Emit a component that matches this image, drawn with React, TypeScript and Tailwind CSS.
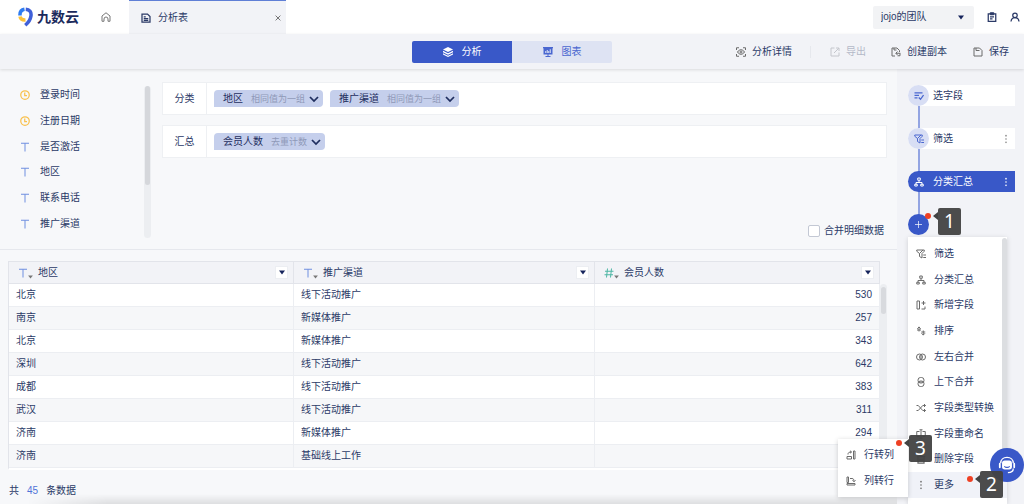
import { useState, type ReactNode } from "react";

type IconProps = { className?: string; children: ReactNode };

// All line icons share a 20x20 grid
function Icon({ className = "size-[10px]", children }: IconProps) {
  return (
    <svg
      viewBox="0 0 20 20"
      fill="none"
      stroke="currentColor"
      strokeWidth="2"
      className={`${className} shrink-0`}
      aria-hidden="true"
    >
      {children}
    </svg>
  );
}

const icons = {
  home: <path d="M6 18.500H2V8l8-6.500L18 8v10.500h-4M6 18.500V14a4 4 0 0 1 8 0v4.500" />,
  doc: <path strokeWidth="2.500" d="M2 2h11l5 5v11H2zM5.500 7.500h4M5.500 11h9M5.500 14.500h9" />,
  close: <path strokeWidth="3" d="M2 2l16 16M18 2L2 18" />,
  clipboard: (
    <>
      <path strokeWidth="2.500" d="M2.500 3.500h15v15h-15zM6 9.500h8M6 13.500h5" />
      <path fill="currentColor" d="M6.500 1.500h7v4h-7z" />
    </>
  ),
  user: (
    <>
      <circle cx="10" cy="6.500" r="4.500" strokeWidth="2.500" />
      <path strokeWidth="2.500" d="M2 19c.5-5 3-8 8-8s7.500 3 8 8" />
    </>
  ),
  detail: (
    <>
      <path d="M1 6V1.500h5M14 1.500h5V6M19 14v4.500h-5M6 18.500H1V14" />
      <path d="M3 10c3.500-6 10.500-6 14 0-3.500 6-10.500 6-14 0z" />
      <circle cx="10" cy="10" r="2" />
    </>
  ),
  exportOut: <path d="M9 2H2v16h16v-7M12 2h6v6M17.500 2.500L8 12" />,
  copy: <path d="M8 18H2V2h10l5 5v3M6 2v4h5M18.500 12.500H10m3-3.500l-3.500 3.500L13 16M18 12.500v5h-5" />,
  save: <path d="M2 2h11l5 5v11H2zM6 2v5h7" />,
  filter: <path d="M1.500 2h15v2.500L12 9v9l-5-3V9L1.500 4.500zM7 9l7-7M14.500 12H20M14.500 17H20" />,
  tree: (
    <>
      <path d="M10 7v4M4 15v-4h12v4" />
      <path d="M7.500 2h5v4.500h-5zM1.500 14.500h5v3.500h-5zM13.500 14.500h5v3.500h-5z" />
    </>
  ),
  pick: <path strokeWidth="2.500" d="M1 3.500h16M1 8.500h9M1 13.500h6M9.500 13l3.500 3.500 6-8.500" />,
  addCol: <path d="M2 2h5v16H2zM11 18h7v-5M15 2v8M11 6h8" />,
  sort: <path d="M6 11V1.500M2.500 5.500L6 2l3.500 3.500M2 8h8M14.500 9v9.500M11 14.500l3.500 3.500 3.500-3.500M10.500 12h8" />,
  joinH: (
    <>
      <rect x="1" y="4" width="12" height="12" rx="6" />
      <rect x="7" y="4" width="12" height="12" rx="6" />
      <path d="M10 6v8" />
    </>
  ),
  joinV: (
    <>
      <rect x="4" y="1" width="12" height="11" rx="5" />
      <rect x="4" y="8" width="12" height="11" rx="5" />
      <path d="M6 10h8" />
    </>
  ),
  shuffle: <path d="M1 5h3.500l9 10H19M1 15h3.500l9-10H19M16 2l3 3-3 3M16 12l3 3-3 3" />,
  rename: <path d="M7 5H1.500v10H7M13 5h5.500v10H13M10 2v16M7 1.500h6M7 18.500h6" />,
  trash: <path strokeWidth="2.500" d="M1.500 5h17M7 2h6M4 5v13h12V5M8 9v5M12 9v5" />,
  rowToCol: <path d="M15 2h3v16h-3zM2 13h9v5H2zM4 9c0-4 2-5 7-5M8 1.500L11 4 8 6.500" />,
  colToRow: <path d="M2 2h3v11H2zM2 15h16v3H2zM8 5h4c3 0 4 2 4 6M13 8.500l3 3 3-3" />,
};

function Dots({ className = "" }: { className?: string }) {
  return (
    <svg viewBox="0 0 4 12" fill="currentColor" className={`h-[10px] w-[4px] shrink-0 ${className}`} aria-hidden="true">
      <circle cx="2" cy="2" r="1" />
      <circle cx="2" cy="6" r="1" />
      <circle cx="2" cy="10" r="1" />
    </svg>
  );
}

function Caret({ className = "" }: { className?: string }) {
  return (
    <svg viewBox="0 0 6 5" fill="currentColor" className={className} aria-hidden="true">
      <path d="M0 0.500h6L3 4.500z" />
    </svg>
  );
}

function Logo() {
  return (
    <svg viewBox="0 0 30 40" fill="none" className="h-[20px] w-[15px]" aria-hidden="true">
      <path d="M4 17C3.500 10 7 5.500 13 4.500" stroke="#2f7cf0" strokeWidth="7" />
      <path d="M15.500 4.500C23 5 27 10 26 17.500 25 25 21 31 14.500 36.500" stroke="#4060d8" strokeWidth="7" />
      <path d="M4 19c1 5 4.500 7.500 11 7" stroke="#fbc13a" strokeWidth="7" />
    </svg>
  );
}

const fields = [
  { name: "登录时间", type: "date" },
  { name: "注册日期", type: "date" },
  { name: "是否激活", type: "text" },
  { name: "地区", type: "text" },
  { name: "联系电话", type: "text" },
  { name: "推广渠道", type: "text" },
];

const groups = [
  {
    label: "分类",
    tags: [
      { name: "地区", hint: "相同值为一组" },
      { name: "推广渠道", hint: "相同值为一组" },
    ],
  },
  { label: "汇总", tags: [{ name: "会员人数", hint: "去重计数" }] },
];

const rows = [
  { city: "北京", channel: "线下活动推广", count: 530 },
  { city: "南京", channel: "新媒体推广", count: 257 },
  { city: "北京", channel: "新媒体推广", count: 343 },
  { city: "深圳", channel: "线下活动推广", count: 642 },
  { city: "成都", channel: "线下活动推广", count: 383 },
  { city: "武汉", channel: "线下活动推广", count: 311 },
  { city: "济南", channel: "新媒体推广", count: 294 },
  { city: "济南", channel: "基础线上工作", count: "" },
];

const menu = [
  { label: "筛选", icon: icons.filter },
  { label: "分类汇总", icon: icons.tree },
  { label: "新增字段", icon: icons.addCol },
  { label: "排序", icon: icons.sort },
  { label: "左右合并", icon: icons.joinH },
  { label: "上下合并", icon: icons.joinV },
  { label: "字段类型转换", icon: icons.shuffle },
  { label: "字段重命名", icon: icons.rename },
  { label: "删除字段", icon: icons.trash },
];

function TypeIcon({ type }: { type: string }) {
  if (type === "date") {
    return (
      <Icon className="size-[10px] text-[#f9c14d]">
        <circle cx="10" cy="10" r="8.500" strokeWidth="2.500" />
        <path strokeWidth="2.500" d="M9.500 5v6H14" />
      </Icon>
    );
  }
  if (type === "number") {
    return (
      <Icon className="size-[10px] text-[#4db6a4]">
        <path d="M7 1L5 19M15 1l-2 18M2 6.500h17M1 13.500h17" />
      </Icon>
    );
  }
  return (
    <Icon className="size-[10px] text-[#6f8fe0]">
      <path d="M2 2.500h16M10 2.500V19" />
    </Icon>
  );
}

function ToolButton({ label, icon, disabled }: { label: string; icon: ReactNode; disabled?: boolean }) {
  return (
    <button disabled={disabled} className="flex items-center gap-[6px] text-[#2b3a67] disabled:text-[#b4b9c8]">
      <Icon className={disabled ? "size-[10px] text-[#c4c6cc]" : "size-[10px] text-[#6b6b6b]"}>{icon}</Icon>
      {label}
    </button>
  );
}

function FieldTag({ name, hint }: { name: string; hint: string }) {
  return (
    <button className="flex h-[17px] items-center rounded-t-[4px] rounded-br-[4px] bg-[#c5cfec] pr-1 pl-[9px] text-[#1f2e5f]">
      {name}
      <span className="ml-2 text-[9px] text-[#8f99b8]">{hint}</span>
      <Icon className="ml-1 size-[10px]">
        <path strokeWidth="3.500" d="M2 6l8 8 8-8" />
      </Icon>
    </button>
  );
}

function ColumnHead({ label, type }: { label: string; type: string }) {
  return (
    <th className="h-[23px] border-t border-r border-b border-[#e2e4ea] bg-[#f2f3f7] p-0 font-normal">
      <div className="flex items-center pr-[5px] pl-[9px]">
        <TypeIcon type={type} />
        <Caret className="mt-2 h-1 w-[5px] text-[#777]" />
        <span className="ml-[5px]">{label}</span>
        <button
          aria-label={`${label} 筛选`}
          className="ml-auto flex size-[13px] items-center justify-center border border-[#eceef2] bg-white"
        >
          <Caret className="h-[5px] w-[6px] text-[#16245c]" />
        </button>
      </div>
    </th>
  );
}

function Step({ label, icon, active, more }: { label: string; icon: ReactNode; active?: boolean; more?: boolean }) {
  return (
    <button
      className={`relative flex h-[21px] w-full items-center rounded-l-full pr-[7px] ${
        active ? "bg-[#3958c8] text-white" : "bg-white"
      }`}
    >
      <span
        className={`flex size-[21px] shrink-0 items-center justify-center rounded-full ${
          active ? "text-white" : "bg-[#d8def4] text-[#4a67d0]"
        }`}
      >
        <Icon>{icon}</Icon>
      </span>
      <span className="ml-1">{label}</span>
      {more && <Dots className={`ml-auto ${active ? "text-white" : "text-[#888]"}`} />}
    </button>
  );
}

function MenuItem({ label, icon }: { label: string; icon: ReactNode }) {
  return (
    <button className="flex w-full items-center gap-2 pl-2 text-left whitespace-nowrap">
      <span className="flex w-[10px] justify-center text-[#6b6b6b]">{icon}</span>
      {label}
    </button>
  );
}

// Numbered callout with a red dot and an arrow on its left side
function Callout({ n, className }: { n: number; className: string }) {
  return (
    <div className={`absolute z-40 flex items-start ${className}`}>
      <span className="size-[6px] rounded-full bg-[#ee4023]" />
      <svg viewBox="0 0 5 8" className="mt-[-1px] ml-[2px] h-2 w-[5px]" fill="#424242" aria-hidden="true">
        <path d="M0 4l5-4v8z" />
      </svg>
      <span className="mt-[-5px] flex h-[27px] w-[23px] items-center justify-center rounded-[2px] bg-[#424242]/95 font-['Noto_Sans',sans-serif] text-[19px] leading-none text-white">
        {n}
      </span>
    </div>
  );
}

export default function App() {
  const [view, setView] = useState("analysis");
  const [merge, setMerge] = useState(false);

  return (
    <div className="relative flex min-h-screen flex-col overflow-hidden bg-[#f7f8fa] font-['Liberation_Sans','Noto_Sans_CJK_SC',sans-serif] text-[10px] leading-[14px] text-[#2b3a67]">
      {/* Header */}
      <header className="flex h-[34px] items-center bg-white pr-1">
        <a href="#" className="flex items-center gap-1 pl-[18px] text-[14px] font-bold text-[#1b2a5c]">
          <Logo />
          九数云
        </a>
        <button aria-label="首页" className="ml-[22px] text-[#777]">
          <Icon>{icons.home}</Icon>
        </button>
        <div className="ml-[18px] flex h-full w-[157px] items-center border-t border-[#5f7fd6] bg-[#f2f3f7] pr-[5px] pl-3">
          <Icon className="size-[10px] text-[#2b3a67]">{icons.doc}</Icon>
          <span className="ml-[7px]">分析表</span>
          <button aria-label="关闭" className="ml-auto text-[#666]">
            <Icon className="size-[6px]">{icons.close}</Icon>
          </button>
        </div>
        <div className="relative ml-auto">
          <select
            aria-label="团队"
            className="h-[23px] w-[101px] appearance-none rounded-[2px] bg-[#f2f3f5] px-2"
          >
            <option>jojo的团队</option>
          </select>
          <Caret className="pointer-events-none absolute top-[9px] right-[10px] h-[5px] w-[6px] text-[#16245c]" />
        </div>
        <button aria-label="任务" className="ml-[13px]">
          <Icon>{icons.clipboard}</Icon>
        </button>
        <button aria-label="账户" className="ml-[13px]">
          <Icon>{icons.user}</Icon>
        </button>
      </header>

      {/* Toolbar */}
      <div className="z-10 grid h-[35px] grid-cols-[1fr_200px_1fr] items-center bg-[#f2f3f7] shadow-[0_1px_3px_rgba(0,0,0,0.12)]">
        <div />
        <div className="flex h-[22px] overflow-hidden rounded-[2px]">
          <button
            onClick={() => setView("analysis")}
            className={`flex flex-1 items-center justify-center gap-[9px] ${
              view === "analysis" ? "bg-[#3958c8] text-white" : "bg-[#dee3f3] text-[#4a67d0]"
            }`}
          >
            <Icon>
              <path stroke="none" fill="currentColor" d="M10 0l10 5-10 5L0 5z" />
              <path stroke="none" fill="currentColor" d="M0 7.500l10 5 10-5v3l-10 5-10-5zM0 12.500l10 5 10-5v2.500l-10 5-10-5z" />
            </Icon>
            分析
          </button>
          <button
            onClick={() => setView("chart")}
            className={`flex flex-1 items-center justify-center gap-[9px] ${
              view === "chart" ? "bg-[#3958c8] text-white" : "bg-[#dee3f3] text-[#4a67d0]"
            }`}
          >
            <Icon>
              <path stroke="none" fill="currentColor" d="M0 0h20v2.500h-1V15H1V2.500H0zM9 15h2v3h4v2H5v-2h4z" />
              <path stroke="#dee3f3" d="M5.500 12V8M8.500 12V6M11.500 12V8M14.500 12V4.500" />
            </Icon>
            图表
          </button>
        </div>
        <div className="flex items-center justify-end pr-[15px]">
          <ToolButton label="分析详情" icon={icons.detail} />
          <span className="mr-[19px] ml-[18px] h-3 w-px bg-[#e6e8ed]" />
          <ToolButton label="导出" icon={icons.exportOut} disabled />
          <span className="w-[25px]" />
          <ToolButton label="创建副本" icon={icons.copy} />
          <span className="w-[26px]" />
          <ToolButton label="保存" icon={icons.save} />
        </div>
      </div>

      <div className="flex flex-1">
        <main className="relative flex min-w-0 flex-1 flex-col">
          {/* Fields and grouping */}
          <section className="flex border-b border-[#e6e8ed] pt-[13px] pb-[11px] pr-[10px]">
            <ul className="mb-px grid h-[155px] w-[144px] auto-rows-fr pl-5">
              {fields.map((f) => (
                <li key={f.name} className="flex items-center gap-[10px]">
                  <TypeIcon type={f.type} />
                  {f.name}
                </li>
              ))}
            </ul>
            <div className="mt-1 mr-[11px] w-[7px] rounded-full bg-[#eceef1] px-px">
              <div className="h-[99px] rounded-full bg-[#d5d7db]" />
            </div>
            <div className="flex flex-1 flex-col">
              {groups.map((g) => (
                <div key={g.label} className="mb-[10px] flex h-[33px] items-center border border-[#eef0f3] bg-white">
                  <div className="flex h-full w-[44px] items-center justify-center border-r border-[#eef0f3]">
                    {g.label}
                  </div>
                  <div className="flex gap-[7px] pl-[7px]">
                    {g.tags.map((t) => (
                      <FieldTag key={t.name} name={t.name} hint={t.hint} />
                    ))}
                  </div>
                </div>
              ))}
              <label className="mt-auto mr-[3px] flex items-center gap-1 self-end">
                <input
                  type="checkbox"
                  checked={merge}
                  onChange={(e) => setMerge(e.target.checked)}
                  className="size-3 appearance-none rounded-[2px] border border-[#c3c8d4] bg-white checked:bg-[#3958c8]"
                />
                合并明细数据
              </label>
            </div>
          </section>

          {/* Result table */}
          <section className="mt-[11px] flex pr-[10px] pl-2">
            <div className="flex-1 border-b-2 border-l border-b-white border-l-[#e2e4ea]">
              <table className="w-full table-fixed border-separate border-spacing-0 text-left">
                <colgroup>
                  <col className="w-[285px]" />
                  <col className="w-[301px]" />
                  <col />
                </colgroup>
                <thead>
                  <tr>
                    <ColumnHead label="地区" type="text" />
                    <ColumnHead label="推广渠道" type="text" />
                    <ColumnHead label="会员人数" type="number" />
                  </tr>
                </thead>
                <tbody>
                  {rows.map((r, i) => (
                    <tr key={i} className="bg-white even:bg-[#f6f7f9]">
                      <td className="h-[23px] border-r border-b border-[#eceef2] px-[7px] py-0">{r.city}</td>
                      <td className="h-[23px] border-r border-b border-[#eceef2] px-[7px] py-0">{r.channel}</td>
                      <td className="h-[23px] border-r border-b border-[#eceef2] px-[7px] py-0 text-right">
                        {r.count}
                      </td>
                    </tr>
                  ))}
                </tbody>
              </table>
            </div>
            <div className="mt-[23px] w-[7px] rounded-t-full bg-[#eceef1] px-px pt-[3px]">
              <div className="h-[27px] rounded-full bg-[#d8dade]" />
            </div>
          </section>

          <p className="mt-[14px] pl-[9px]">
            共<span className="mx-2 text-[#4f73d8]">45</span>条数据
          </p>
          <div className="absolute right-0 bottom-0 left-0 h-[10px] bg-gradient-to-b from-transparent to-black/10 [mask-image:linear-gradient(to_right,transparent_3%,black_12%)]" />
        </main>

        {/* Steps */}
        <aside className="w-[127px] bg-[#f2f3f7] pt-4 pr-[9px] pl-[11px]">
          <div className="relative flex flex-col gap-[22px]">
            <span className="absolute top-2 bottom-2 left-[10px] w-[2px] bg-[#93a4e2]" />
            <Step label="选字段" icon={icons.pick} />
            <Step label="筛选" icon={icons.filter} more />
            <Step label="分类汇总" icon={icons.tree} active more />
            <div className="relative">
              <button
                aria-label="添加步骤"
                className="flex size-[21px] items-center justify-center rounded-full bg-[#3958c8] text-white"
              >
                <Icon className="size-[7px]">
                  <path d="M10 0v20M0 10h20" />
                </Icon>
              </button>

              <div className="absolute top-[23px] left-0 w-[99px] bg-white pt-1 shadow-[0_1px_5px_rgba(0,0,0,0.15)]">
                <div className="grid h-[263px] grid-rows-[repeat(10,minmax(0,1fr))] pb-[6px]">
                  {menu.map((m) => (
                    <MenuItem key={m.label} label={m.label} icon={<Icon>{m.icon}</Icon>} />
                  ))}
                  <div className="grid bg-[#f0f2f8]">
                    <MenuItem label="更多" icon={<Dots />} />
                  </div>
                </div>
                <div className="absolute top-px right-0 h-[234px] w-[5px] rounded-full bg-[#dcdee1]" />
                <div className="absolute right-full bottom-[7px] grid h-[58px] w-[70px] grid-rows-2 bg-white py-[3px] shadow-[0_1px_5px_rgba(0,0,0,0.18)]">
                  <MenuItem label="行转列" icon={<Icon>{icons.rowToCol}</Icon>} />
                  <MenuItem label="列转行" icon={<Icon>{icons.colToRow}</Icon>} />
                </div>
                <Callout n={3} className="bottom-[42px] left-[-12px]" />
                <Callout n={2} className="bottom-[6px] left-[59px]" />
              </div>
              <Callout n={1} className="top-[-1px] left-[17px]" />
            </div>
          </div>
        </aside>
      </div>

      <button
        aria-label="在线客服"
        className="absolute right-0 bottom-[22px] z-30 flex size-[34px] items-center justify-center rounded-full bg-[#3958c8] text-white"
      >
        <Icon className="size-[18px]">
          <path strokeWidth="1.500" d="M3 8C3 4 6 1.500 10 1.500S17 4 17 8M17 14c0 3-2.500 4.500-6 4.500" />
          <rect x="4.500" y="5" width="11" height="10" rx="3" fill="currentColor" stroke="none" />
          <path strokeWidth="2" strokeLinecap="round" d="M2 8.500v4M18 8.500v4" />
          <path stroke="#3958c8" strokeWidth="1.200" d="M7 11.500c1.500 1.500 4.500 1.500 6 0" />
        </Icon>
      </button>
    </div>
  );
}
